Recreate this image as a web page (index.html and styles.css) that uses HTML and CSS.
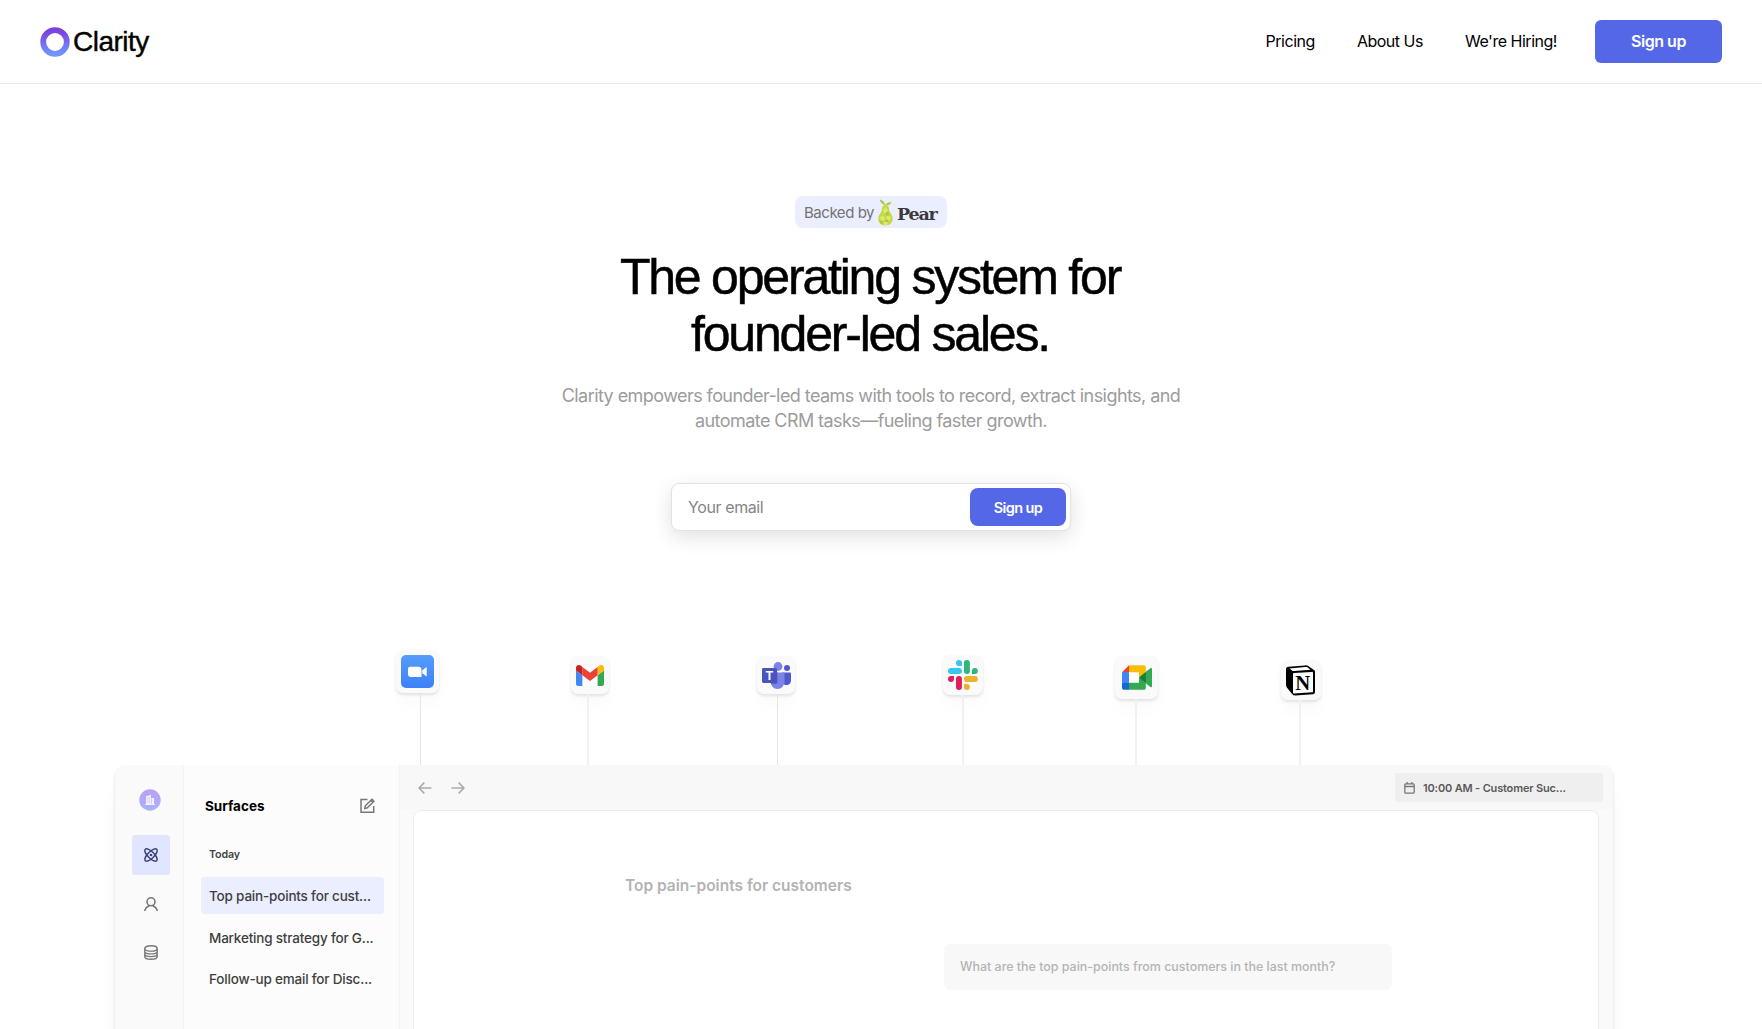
FILE: index.html
```html
<!DOCTYPE html>
<html lang="en">
<head>
<meta charset="utf-8">
<title>Clarity</title>
<link rel="stylesheet" href="styles.css">
</head>
<body>
<header class="header">
  <a class="brand">
    <svg class="brand-mark" viewBox="0 0 30 30"><defs><linearGradient id="ring" x1="0" y1="0" x2="0" y2="1"><stop offset="0" stop-color="#7c3fe0"/><stop offset="1" stop-color="#7095fb"/></linearGradient></defs><circle cx="15" cy="15" r="11.8" fill="none" stroke="url(#ring)" stroke-width="5.8"/></svg>
    <span class="brand-name">Clarity</span>
  </a>
  <nav class="nav">
    <a class="nav-link">Pricing</a>
    <a class="nav-link">About Us</a>
    <a class="nav-link hiring">We're Hiring!</a>
    <a class="nav-button">Sign up</a>
  </nav>
</header>
<main class="main">
  <section class="hero">
    <div class="badge">
      <span class="badge-label">Backed by</span>
      <svg class="badge-pear" viewBox="0 0 15 27"><path d="M7 7C6 5 4 5.500 2.500 3 2 1.500 2 1 2 .5 4.500 1 6.500 3 7.400 6 8.500 4 10.500 3 13.500 3 13 5.500 10 6.500 7.800 6.500z" fill="#a9c94a"/><path d="M7.500 6.300c3 0 3.600 2 3.700 4.500.1 3 3.500 4.700 3.500 9 0 4.300-3 6.700-7.200 6.700S.3 24.100.3 19.800c0-4.300 3.400-6 3.500-9 .1-2.500.7-4.500 3.700-4.500z" fill="#c3da45"/><path d="M5 11l3-3 2 4-3 3zM2 18l4-1 1 4-4 1zM9 16l4 2-2 4-3-2zM6 23l4 0-1 3-3 0z" fill="#dde873"/><path d="M7 15l3-3 1 4-2 1zM7 21l2-1 2 3-3 0zM1 21l3 1 1 3-3-1z" fill="#adca35"/></svg>
      <span class="badge-name">Pear</span>
    </div>
    <h1 class="title">The operating system for<br>founder-led sales.</h1>
    <p class="subtitle">Clarity empowers founder-led teams with tools to record, extract insights, and<br>automate CRM tasks—fueling faster growth.</p>
    <form class="signup">
      <span class="signup-placeholder">Your email</span>
      <a class="signup-button">Sign up</a>
    </form>
  </section>
  <section class="integrations">
    <div class="integration zoom"><div class="tile"><svg width="33" height="33" viewBox="0 0 33 33"><defs><linearGradient id="zoomBg" x1="0" y1="0" x2="0" y2="1"><stop offset="0" stop-color="#559dfb"/><stop offset="1" stop-color="#3d80f8"/></linearGradient></defs><rect width="33" height="33" rx="5" fill="url(#zoomBg)"/><path d="M9 11.700h8.500a3 3 0 0 1 3 3V22H10a3 3 0 0 1-3-3v-5.300a2 2 0 0 1 2-2zM21.200 15.200l4.500-3.300v9.700l-4.500-3.300z" fill="#fff"/></svg></div><i class="stem"></i></div>
    <div class="integration gmail"><div class="tile"><svg width="28" height="21" viewBox="52 42 88 66"><path fill="#fff" d="M72 48h48v60H72z"/><path fill="#4285f4" d="M58 108h14V74L52 59v43c0 3.320 2.690 6 6 6"/><path fill="#34a853" d="M120 108h14c3.320 0 6-2.690 6-6V59l-20 15"/><path fill="#fbbc04" d="M120 48v26l20-15v-8c0-7.420-8.470-11.650-14.400-7.200"/><path fill="#ea4335" d="M72 74V48l24 18 24-18v26L96 92"/><path fill="#c5221f" d="M52 51v8l20 15V48l-5.600-4.200c-5.940-4.450-14.400-.22-14.400 7.200"/></svg></div><i class="stem"></i></div>
    <div class="integration teams"><div class="tile"><svg width="29" height="27" viewBox="0 0 29 27"><circle cx="25" cy="6" r="3" fill="#5059c9"/><path d="M20 10.500h8a1 1 0 0 1 1 1V18c0 3-2 5-4.500 5S20 21 20 18z" fill="#5059c9"/><circle cx="16" cy="4.500" r="4.400" fill="#7b83eb"/><path d="M9 10.500h12.500a1 1 0 0 1 1 1V19c0 4.500-3 8-7 8s-7-3.500-7-8z" fill="#7b83eb"/><path d="M10 10.500h5.500v10a1.500 1.500 0 0 1-1.500 1.500H9z" fill="#5a61c6"/><rect y="6" width="15" height="15" rx="1.400" fill="#4b53bc"/><text x="7.500" y="17.600" text-anchor="middle" font-family="Liberation Sans" font-weight="700" font-size="12" fill="#fff">T</text></svg></div><i class="stem"></i></div>
    <div class="integration slack"><div class="tile"><svg width="30" height="30" viewBox="0 0 54 54"><path fill="#36c5f0" d="M19.712.133a5.381 5.381 0 0 0-5.376 5.387 5.381 5.381 0 0 0 5.376 5.386h5.376V5.520A5.381 5.381 0 0 0 19.712.133m0 14.365H5.376A5.381 5.381 0 0 0 0 19.884a5.381 5.381 0 0 0 5.376 5.387h14.336a5.381 5.381 0 0 0 5.376-5.387 5.381 5.381 0 0 0-5.376-5.386"/><path fill="#2eb67d" d="M53.760 19.884a5.381 5.381 0 0 0-5.376-5.386 5.381 5.381 0 0 0-5.376 5.386v5.387h5.376a5.381 5.381 0 0 0 5.376-5.387m-14.336 0V5.520A5.381 5.381 0 0 0 34.048.133a5.381 5.381 0 0 0-5.376 5.387v14.364a5.381 5.381 0 0 0 5.376 5.387 5.381 5.381 0 0 0 5.376-5.387"/><path fill="#ecb22e" d="M34.048 54a5.381 5.381 0 0 0 5.376-5.387 5.381 5.381 0 0 0-5.376-5.386h-5.376v5.386A5.381 5.381 0 0 0 34.048 54m0-14.365h14.336a5.381 5.381 0 0 0 5.376-5.386 5.381 5.381 0 0 0-5.376-5.387H34.048a5.381 5.381 0 0 0-5.376 5.387 5.381 5.381 0 0 0 5.376 5.386"/><path fill="#e01e5a" d="M0 34.249a5.381 5.381 0 0 0 5.376 5.386 5.381 5.381 0 0 0 5.376-5.386v-5.387H5.376A5.381 5.381 0 0 0 0 34.250m14.336-.001v14.364A5.381 5.381 0 0 0 19.712 54a5.381 5.381 0 0 0 5.376-5.387V34.250a5.381 5.381 0 0 0-5.376-5.387 5.381 5.381 0 0 0-5.376 5.387"/></svg></div><i class="stem"></i></div>
    <div class="integration meet"><div class="tile"><svg width="30" height="25" viewBox="0 0 87.500 72"><path fill="#fff" d="M20 20h30v32H20z"/><path fill="#188038" d="M49.500 36l8.530 9.750 11.470 7.330 2-17.020-2-16.640-11.690 6.440z"/><path fill="#1967d2" d="M0 51.500V66c0 3.315 2.685 6 6 6h14.500l3-10.960-3-9.540-9.950-3z"/><path fill="#ea4335" d="M20.500 0L0 20.500l10.550 3 9.950-3 2.950-9.410z"/><path fill="#4285f4" d="M20.500 20.500H0v31h20.500z"/><path fill="#34a853" d="M82.600 8.680L69.500 19.420v33.660l13.160 10.790c1.970 1.540 4.850.135 4.850-2.370V11c0-2.535-2.945-3.925-4.910-2.320zM49.500 36v15.500h-29V72h43c3.315 0 6-2.685 6-6V53.080z"/><path fill="#fbbc04" d="M63.500 0h-43v20.500h29V36l20-16.570V6c0-3.315-2.685-6-6-6z"/></svg></div><i class="stem"></i></div>
    <div class="integration notion"><div class="tile"><svg width="30" height="31" viewBox="0 0 30 31"><path d="M2.500 1.800L19 .4c1.500-.1 2.500 0 3.500.8L28 5c.8.6 1 1 1 2v20c0 1.300-.7 2.100-2 2.200L9 30.400c-1.200 0-1.900-.2-2.600-1.100L1 22.800c-.7-1-1-1.700-1-2.700V4.200c0-1.300.8-2.200 2.500-2.400z" fill="#000"/><path d="M3.500 3.400L19.500 2.100c1-.1 1.500 0 2.200.5L24.600 4.700 8 5.900c-1 .1-1.400 0-2-.5z" fill="#fff"/><path d="M7.700 8.100L26 6.900c.7 0 1 .2 1 .9v18.500c0 .7-.3 1-1 1L8.200 28.500c-.8 0-1.200-.3-1.200-1.100V9.200c0-.7.200-1.100.7-1.100z" fill="#fff"/><text x="16.800" y="25" text-anchor="middle" font-family="Liberation Serif" font-weight="700" font-size="22" textLength="15" lengthAdjust="spacingAndGlyphs" fill="#000">N</text></svg></div><i class="stem"></i></div>
  </section>
  <section class="app">
    <aside class="rail">
      <svg class="avatar" viewBox="0 0 22 22"><defs><linearGradient id="av" x1="0" y1="0" x2="0" y2="1"><stop offset="0" stop-color="#bd9ff5"/><stop offset="1" stop-color="#a5b4fd"/></linearGradient></defs><circle cx="11" cy="11" r="10.700" fill="url(#av)"/><path d="M7 7.200l5-1.500V15H7zM12.500 9H15v6h-2.500zM6 15h10v1H6z" fill="#f3effe"/><path d="M8.700 8.500v5M10.400 8.500v5" stroke="#b9a6f8" stroke-width=".8" stroke-dasharray="1 1"/></svg>
      <div class="rail-item active"><svg width="14" height="14" viewBox="0 0 14 14" fill="none" stroke="#3c4374" stroke-width="1.500"><ellipse cx="7" cy="7" rx="8" ry="3.300" transform="rotate(45 7 7)"/><ellipse cx="7" cy="7" rx="8" ry="3.300" transform="rotate(-45 7 7)"/><circle cx="7" cy="7" r=".6"/></svg></div>
      <div class="rail-item"><svg width="14" height="14" viewBox="0 0 14 14" fill="none" stroke="#777" stroke-width="1.600" stroke-linecap="round"><circle cx="7" cy="4.800" r="4"/><path d="M.8 13.300C1.500 10.800 3 9.700 5 8.800M13.200 13.300C12.500 10.800 11 9.700 9 8.800"/></svg></div>
      <div class="rail-item"><svg width="14" height="15" viewBox="0 0 14 15" fill="none" stroke="#777" stroke-width="1.400"><ellipse cx="7" cy="3.400" rx="6.200" ry="2.700"/><path d="M.8 3.400v8c0 1.600 2.700 2.800 6.200 2.800s6.200-1.200 6.200-2.800v-8M.8 6.200C.8 7.700 3.500 8.900 7 8.900s6.200-1.200 6.200-2.700M.8 9c0 1.400 2.700 2.600 6.200 2.600s6.200-1.200 6.200-2.600"/></svg></div>
    </aside>
    <aside class="sidebar">
      <div class="sidebar-head"><span class="sidebar-title">Surfaces</span><svg width="15" height="15" viewBox="0 0 15 15" fill="none" stroke="#777" stroke-width="1.500"><path d="M7.500 1.500H1v12.700h12.700V8"/><path d="M4.800 10.400l.5-2.600L12 1.200l2 2-6.700 6.600zM10.700 2.500l2 2"/></svg></div>
      <div class="sidebar-label">Today</div>
      <div class="sidebar-item active">Top pain-points for cust...</div>
      <div class="sidebar-item">Marketing strategy for G...</div>
      <div class="sidebar-item">Follow-up email for Disc...</div>
    </aside>
    <div class="workspace">
      <div class="toolbar">
        <svg class="arrow" viewBox="0 0 14 12" fill="none" stroke="#aaa" stroke-width="1.600"><path d="M13.500 6H1M6.300.6L1 6l5.300 5.400"/></svg>
        <svg class="arrow" viewBox="0 0 14 12" fill="none" stroke="#aaa" stroke-width="1.600"><path d="M.5 6H13M7.700.6L13 6l-5.300 5.400"/></svg>
        <div class="event"><svg width="11" height="12" viewBox="0 0 11 12" fill="none" stroke="#777" stroke-width="1.300"><rect x=".8" y="1.800" width="9.400" height="9.400" rx="1"/><path d="M.8 4.500h9.400M3.200 0v2M7.800 0v2"/></svg><span>10:00 AM - Customer Suc...</span></div>
      </div>
      <div class="panel">
        <div class="panel-title">Top pain-points for customers</div>
        <div class="query">What are the top pain-points from customers in the last month?</div>
      </div>
    </div>
  </section>
</main>
</body>
</html>
```
FILE: styles.css
```css
* { box-sizing: border-box; }
body { margin: 0; height: 1029px; overflow: hidden; background: #fff; color: #000; font-family: Inter, "Liberation Sans", sans-serif; }
svg { display: block; flex: none; }
span, a { white-space: nowrap; }

.header { display: flex; justify-content: space-between; align-items: center; height: 84px; padding: 0 40px; border-bottom: 1px solid #e8e8e8; }
.brand { display: flex; align-items: center; gap: 3px; }
.brand-mark { width: 30px; height: 30px; }
.brand-name { font: 28px/32px "Liberation Sans", sans-serif; letter-spacing: -.5px; -webkit-text-stroke: .4px #000; }
.nav { display: flex; align-items: center; font-size: 16px; line-height: 20px; letter-spacing: -.48px; }
.nav-link { margin-right: 42px; padding-bottom: 1px; }
.hiring { margin-right: 38px; }
.nav-button { display: flex; justify-content: center; align-items: center; width: 127px; height: 43px; padding-bottom: 1px; border-radius: 6px; background: #5468e7; color: #fff; font-weight: 600; }

.main { padding-right: 20px; }
.hero { display: flex; flex-direction: column; align-items: center; height: 566px; padding-top: 112px; }
.badge { display: flex; align-items: center; width: 152px; height: 32px; padding-left: 9px; border-radius: 8px; background: #ebeeff; }
.badge-label { width: 74px; font-size: 15px; letter-spacing: -.46px; color: #737373; }
.badge-pear { width: 15px; height: 27px; margin-right: 4px; }
.badge-name { padding-top: 3px; font: 700 17.500px/24px "DejaVu Serif", serif; letter-spacing: -1.200px; color: #3a3a3a; }
.title { margin: 21px 2px 0 0; font: 400 50px/57px "Liberation Sans", sans-serif; letter-spacing: -2.200px; text-align: center; -webkit-text-stroke: .5px #000; }
.subtitle { margin: 20px 0 0; font-size: 18px; line-height: 25px; letter-spacing: -.565px; text-align: center; color: #9c9c9c; }
.signup { display: flex; justify-content: space-between; align-items: center; width: 400px; height: 48px; margin: 50px 0 0; padding: 0 4px 0 16px; border: 1px solid #e2e2e2; border-radius: 8px; background: #fff; box-shadow: 0 6px 20px rgba(0, 0, 0, .12); }
.signup-placeholder { font-size: 16px; letter-spacing: -.4px; color: #858585; }
.signup-button { display: flex; justify-content: center; align-items: center; width: 96px; height: 38px; border-radius: 8px; background: #5468e7; color: #fff; font-size: 14.500px; font-weight: 600; letter-spacing: -.6px; }

.integrations { display: grid; grid-template-columns: 175px 186px 186px 172px 166px 40px; height: 115px; padding-left: 396px; }
.integration { display: flex; flex-direction: column; align-items: flex-start; }
.tile { display: flex; justify-content: center; align-items: center; width: 38px; height: 38px; border-radius: 7px; background: #fafafa; box-shadow: 0 2px 3px rgba(0, 0, 0, .1), 0 12px 18px rgba(0, 0, 0, .02); }
.stem { flex: 1; width: 2px; background: #f1f1f1; }
.zoom .tile, .meet .tile { width: 43px; height: 43px; }
.zoom .stem { width: 1px; margin-left: 24px; background: #e6e6e6; }
.gmail, .teams, .meet { padding-top: 6px; }
.gmail .stem { margin-left: 16px; }
.teams .stem { width: 1px; margin-left: 20px; background: #e4e4e4; }
.slack { padding-top: 5px; }
.slack .tile, .notion .tile { width: 40px; height: 40px; }
.slack .stem { margin-left: 19px; }
.meet .stem { margin-left: 20px; }
.notion { padding-top: 10px; }
.notion .stem { margin-left: 18px; }

.app { display: grid; grid-template-columns: 69px 216px 1213px; width: 1498px; height: 300px; margin-left: 115px; border-radius: 9px 9px 0 0; background: #fafafa; box-shadow: 0 3px 3px rgba(0, 0, 0, .16), 0 30px 24px rgba(0, 0, 0, .03); overflow: hidden; }
.rail { display: flex; flex-direction: column; padding: 24px 0 0 17px; border-right: 1px solid #f4f4f4; background: #fafafa; }
.avatar { width: 22px; height: 22px; margin: 0 0 24px 7px; }
.rail-item { display: flex; justify-content: center; align-items: center; width: 38px; height: 40px; margin-bottom: 8.500px; border-radius: 3px; }
.rail-item.active { background: #e1e5ff; }
.sidebar { padding: 32px 15px 0 17px; border-right: 1px solid #f3f3f3; background: #fcfcfc; }
.sidebar-head { display: flex; justify-content: space-between; height: 18px; padding: 0 9px 0 4px; }
.sidebar-head svg { margin-top: 1px; }
.sidebar-title { font-size: 13.500px; line-height: 18px; font-weight: 700; }
.sidebar-label { margin: 32px 0 15px; padding-left: 8px; font-size: 10.700px; line-height: 15px; font-weight: 600; letter-spacing: -.15px; color: #444; }
.sidebar-item { height: 37px; margin-bottom: 4.600px; padding-left: 8px; border-radius: 3px; font-size: 13.500px; line-height: 38px; font-weight: 500; letter-spacing: -.19px; white-space: nowrap; color: #3f3f3f; }
.sidebar-item.active { background: #ebeeff; }
.toolbar { display: flex; align-items: center; gap: 19px; height: 45px; padding: 0 10px 0 18px; background: #f8f8f8; }
.arrow { width: 14px; height: 12px; }
.event { display: flex; align-items: center; gap: 8px; width: 208px; height: 29px; margin-left: auto; padding-left: 9px; border-radius: 2px; background: #efefef; font-size: 11px; font-weight: 600; letter-spacing: -.17px; color: #5a5a5a; }
.panel { width: 1186px; height: 300px; margin-left: 13px; padding: 65px 0 0 211px; border: 1px solid #ececec; border-radius: 8px; background: #fff; }
.panel-title { font-size: 15.500px; line-height: 20px; font-weight: 600; color: #b3b3b3; }
.query { width: 448px; height: 46px; margin: 48px 0 0 319px; padding-left: 16px; border-radius: 6px; background: #f8f8f8; font-size: 12.450px; line-height: 46px; font-weight: 500; color: #b4b4b4; }
```
